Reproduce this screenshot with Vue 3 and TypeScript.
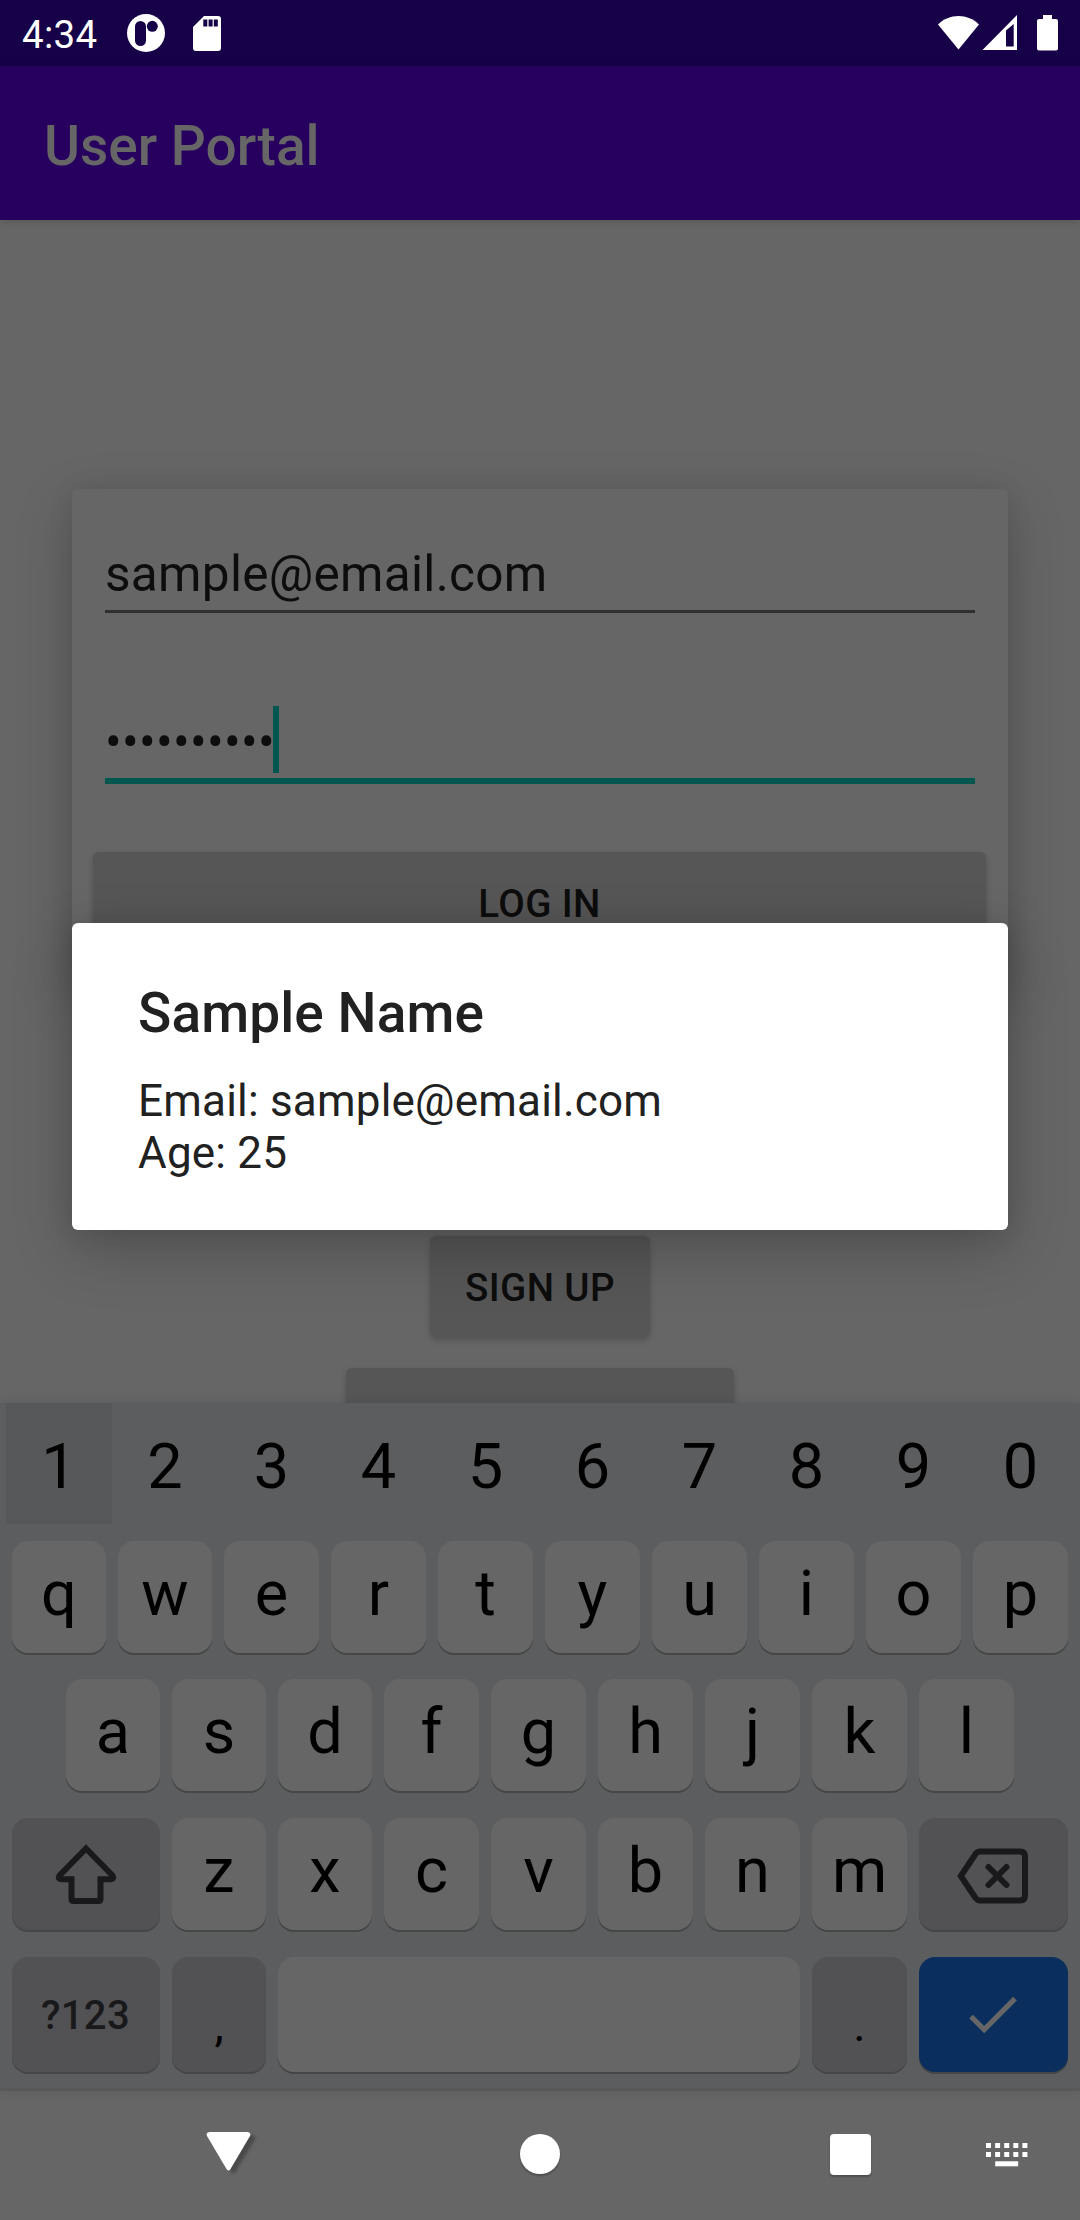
<script setup lang="ts">
interface Key {
  label?: string
  icon?: 'shift' | 'backspace' | 'done'
  width: number
  kind?: 'fn' | 'sym' | 'punct' | 'enter'
}

const email = 'sample@email.com'
const password = '•'.repeat(10)

// Columns near the left edge are one pixel narrower, so a row fills whole pixels.
const letters = (s: string, narrow: number): Key[] =>
  [...s].map((label, i) => ({ label, width: i < narrow ? 106 : 107 }))

const digits = letters('1234567890', 2)

const rows: Key[][] = [
  letters('qwertyuiop', 2),
  letters('asdfghjkl', 3),
  [
    { icon: 'shift', width: 160, kind: 'fn' },
    ...letters('zxcvbnm', 2),
    { icon: 'backspace', width: 161, kind: 'fn' },
  ],
  [
    { label: '?123', width: 160, kind: 'sym' },
    { label: ',', width: 106, kind: 'punct' },
    { width: 534 },
    { label: '.', width: 107, kind: 'punct' },
    { icon: 'done', width: 161, kind: 'enter' },
  ],
]
</script>

<template>
  <div class="screen">
    <header class="status">
      <span class="time">4:34</span>
      <svg class="app-icon" width="38" height="38" viewBox="0 0 38 38">
        <circle cx="19" cy="19" r="19" fill="#fff" />
        <rect x="8" y="7" width="11" height="25" rx="5.5" fill="#160048" />
        <circle cx="25.3" cy="12.3" r="5.5" fill="#160048" />
      </svg>
      <svg class="sd-icon" width="28" height="35" viewBox="0 0 28 35">
        <path d="M11 0H25a3 3 0 0 1 3 3V32a3 3 0 0 1-3 3H3a3 3 0 0 1-3-3V11Z" fill="#fff" />
        <path d="M10.3 3.5h4v7h-4zM15.6 3.5h4v7h-4zM20.8 3.5h4v7h-4z" fill="#160048" />
      </svg>
      <svg class="sys-icons" width="122" height="38" viewBox="0 0 122 38">
        <path d="M0 10.500C11-1 30-1 41 10.500L20.500 35.500Z" fill="#fff" />
        <path fill-rule="evenodd" d="M44.500 36L79 1V36ZM68 16.500V32.500H75.700V10Z" fill="#fff" />
        <path d="M105 1h9v4h4a2 2 0 0 1 2 2V34.500a2 2 0 0 1-2 2H101a2 2 0 0 1-2-2V7a2 2 0 0 1 2-2h4Z" fill="#fff" />
      </svg>
    </header>

    <div class="appbar"><h1>User Portal</h1></div>

    <main class="content">
      <section class="card">
        <div class="field">{{ email }}</div>
        <div class="field focused"><span>{{ password }}</span><i class="caret"></i></div>
        <button class="btn login">LOG IN</button>
      </section>
      <button class="btn signup">SIGN UP</button>
      <button class="btn wide"></button>
    </main>

    <section class="keyboard">
      <div class="digits">
        <span
          v-for="(d, i) in digits"
          :key="d.label"
          :class="{ pressed: i === 0 }"
          :style="{ width: d.width + 'px' }"
        >{{ d.label }}</span>
      </div>
      <div v-for="(row, r) in rows" :key="r" class="row">
        <div v-for="(k, i) in row" :key="i" class="slot" :style="{ width: k.width + 'px' }">
          <div class="key" :class="k.kind">
            <svg v-if="k.icon === 'shift'" width="64" height="62" viewBox="0 0 64 62">
              <path d="M32 5.500L58.500 32.500Q60.500 36 57 36.300H46.500V56Q46.500 58 44.500 58H19.500Q17.500 58 17.500 56V36.300H7Q3.500 36 5.500 32.500Z" />
            </svg>
            <svg v-else-if="k.icon === 'backspace'" class="bksp" width="72" height="58" viewBox="0 0 72 58">
              <path d="M23 4.500H63Q68 4.500 68 9.500V48.500Q68 53.500 63 53.500H23Q20.500 53.500 18.500 51L3.800 29L18.500 7Q20.500 4.500 23 4.500Z" />
              <path class="cross" d="M31.500 20L49.500 38M49.500 20L31.500 38" />
            </svg>
            <svg v-else-if="k.icon === 'done'" class="check" width="48" height="38" viewBox="0 0 48 38">
              <path d="M2 20.500L15.200 33.500L46 2.700" />
            </svg>
            <span v-else>{{ k.label }}</span>
          </div>
        </div>
      </div>
    </section>

    <nav class="nav">
      <svg class="back" width="56" height="50" viewBox="0 0 56 50">
        <path d="M3.500 1H41.500Q45.500 1.500 44 5L24.500 38Q22.500 41 20.500 38L1 5Q-.5 1.500 3.500 1Z" fill="#fff" />
      </svg>
      <i class="home"></i>
      <i class="recent"></i>
      <svg class="ime" width="42" height="24" viewBox="0 0 42 24" fill="#fff">
        <template v-for="c in 5" :key="c">
          <rect :x="(c - 1) * 9.1" y="0" width="5" height="5" />
          <rect :x="(c - 1) * 9.1" y="9" width="5" height="5" />
        </template>
        <rect x="9.200" y="18.300" width="23" height="5" />
      </svg>
    </nav>

    <div class="dialog" role="dialog">
      <h2>Sample Name</h2>
      <p>Email: {{ email }}<br />Age: 25</p>
    </div>
  </div>
</template>

<style>
body {
  margin: 0;
  background: #666;
}
</style>

<style scoped>
.screen {
  position: relative;
  width: 1080px;
  height: 2220px;
  display: flex;
  flex-direction: column;
  overflow: hidden;
  background: #666;
  font-family: Roboto, sans-serif;
}
svg {
  display: block;
  flex: none;
}
.status {
  flex: none;
  height: 66px;
  box-sizing: border-box;
  display: flex;
  align-items: flex-start;
  padding: 14px 20px 0 22px;
  background: #160048;
  color: #fff;
}
.time {
  width: 105px;
  font-size: 38.5px;
  line-height: 42px;
  letter-spacing: 0.3px;
}
.sd-icon {
  margin: 2px 0 0 28px;
}
.sys-icons {
  margin-left: auto;
}
.appbar {
  flex: none;
  height: 154px;
  box-sizing: border-box;
  padding: 6px 44px 0;
  display: flex;
  align-items: center;
  background: #27005f;
  box-shadow: 0 2px 8px rgba(0, 0, 0, 0.12);
  z-index: 1;
}
h1 {
  margin: 0;
  font-size: 55px;
  font-weight: 500;
  color: #666;
}
.content {
  flex: none;
  height: 1183px;
  box-sizing: border-box;
  overflow: hidden;
  display: flex;
  flex-direction: column;
  align-items: center;
  padding-top: 269px;
}
.card {
  flex: none;
  width: 936px;
  height: 491px;
  box-sizing: border-box;
  border-radius: 6px;
  padding: 55px 22px 0 21px;
  background: #666;
  box-shadow: 0 20px 60px rgba(0, 0, 0, 0.2), 0 0 24px rgba(0, 0, 0, 0.08);
}
.field {
  margin: 0 11px 0 12px;
  padding-bottom: 6px;
  border-bottom: 3px solid #303030;
  font-size: 49.5px;
  line-height: 60px;
  letter-spacing: 0.3px;
  color: #0d0d0d;
}
.field.focused {
  display: flex;
  margin-top: 93px;
  padding-bottom: 5px;
  border-bottom: 6px solid #01574f;
  height: 67px;
  line-height: 72px;
}
.caret {
  width: 6px;
  height: 67px;
  margin-left: -2px;
  background: #01574f;
}
.btn {
  flex: none;
  display: block;
  height: 101px;
  padding: 2px 0 0;
  border: 0;
  border-radius: 6px;
  background: #565656;
  color: #0d0d0d;
  font: 500 38.5px/99px Roboto, sans-serif;
  letter-spacing: 0.4px;
  box-shadow: 0 3px 6px rgba(0, 0, 0, 0.2);
}
.login {
  width: 100%;
  margin-top: 68px;
}
.signup {
  width: 220px;
  margin-top: 256px;
}
.wide {
  width: 388px;
  margin-top: 31px;
}
.keyboard {
  flex: none;
  position: relative;
  height: 688px;
  box-sizing: border-box;
  padding: 0 6px;
  background: #5c5d5f;
  border-bottom: 3px solid #595959;
  box-shadow: 0 0 10px rgba(0, 0, 0, 0.12);
}
.digits {
  display: flex;
  height: 121px;
  margin-bottom: 17px;
  font-size: 63px;
  line-height: 128px;
  text-align: center;
  color: #000;
}
.digits span {
  height: 121px;
}
.digits .pressed {
  background: #565758;
}
.row {
  display: flex;
  justify-content: center;
  height: 112px;
  margin-bottom: 27px;
}
.digits + .row {
  margin-bottom: 26px;
}
.row:last-child {
  height: 115px;
  margin-bottom: 0;
}
.slot {
  flex: none;
  box-sizing: border-box;
  padding: 0 6px;
}
.key {
  height: 100%;
  display: flex;
  align-items: center;
  justify-content: center;
  border-radius: 16px;
  background: #666;
  box-shadow: 0 2px 0 #454646;
  font-size: 63px;
  line-height: 74px;
  color: #000;
}
.key span {
  margin-top: -6px;
}
.key.fn,
.key.sym,
.key.punct {
  background: #525254;
}
.key.sym {
  font-size: 40px;
  font-weight: 500;
  letter-spacing: 0.3px;
  color: #19191b;
}
.key.sym span {
  margin: 3px 0 0 -1px;
}
.key.punct {
  font-size: 47px;
}
.key.punct span {
  margin-top: 20px;
}
.key.enter {
  background: #0a2e5d;
}
.key svg {
  fill: none;
  stroke: #19191b;
  stroke-width: 6;
}
.key .bksp {
  margin: 4px 0 0 -1px;
}
.key .cross {
  stroke-linecap: round;
}
.key .check {
  margin-left: -1px;
  stroke: #666;
  stroke-width: 5.200;
}
.nav {
  flex: none;
  height: 129px;
  display: flex;
  align-items: flex-start;
  background: #666;
}
.back {
  margin: 40px 0 0 206px;
  overflow: visible;
  filter: drop-shadow(5px 3px 1.5px rgba(0, 0, 0, 0.28));
}
.home {
  width: 40px;
  height: 40px;
  margin: 43px 0 0 258px;
  border-radius: 50%;
  background: #fff;
  box-shadow: 0 2px 2px rgba(0, 0, 0, 0.25);
}
.recent {
  width: 41px;
  height: 41px;
  margin: 43px 0 0 270px;
  border-radius: 4px;
  background: #fff;
  box-shadow: 0 2px 2px rgba(0, 0, 0, 0.25);
}
.ime {
  margin: 52px 0 0 115px;
}
.dialog {
  position: absolute;
  z-index: 2;
  left: 72px;
  top: 923px;
  width: 936px;
  height: 307px;
  box-sizing: border-box;
  padding: 50px 66px 0;
  border-radius: 6px;
  background: #fff;
  color: #212121;
  box-shadow: 0 20px 60px rgba(0, 0, 0, 0.22), 0 0 24px rgba(0, 0, 0, 0.1);
}
h2 {
  margin: 0;
  font-size: 55px;
  line-height: 80px;
  font-weight: 500;
  letter-spacing: 0.1px;
}
p {
  margin: 23px 0 0;
  font-size: 44px;
  line-height: 51.600px;
  letter-spacing: 0.2px;
}
</style>
